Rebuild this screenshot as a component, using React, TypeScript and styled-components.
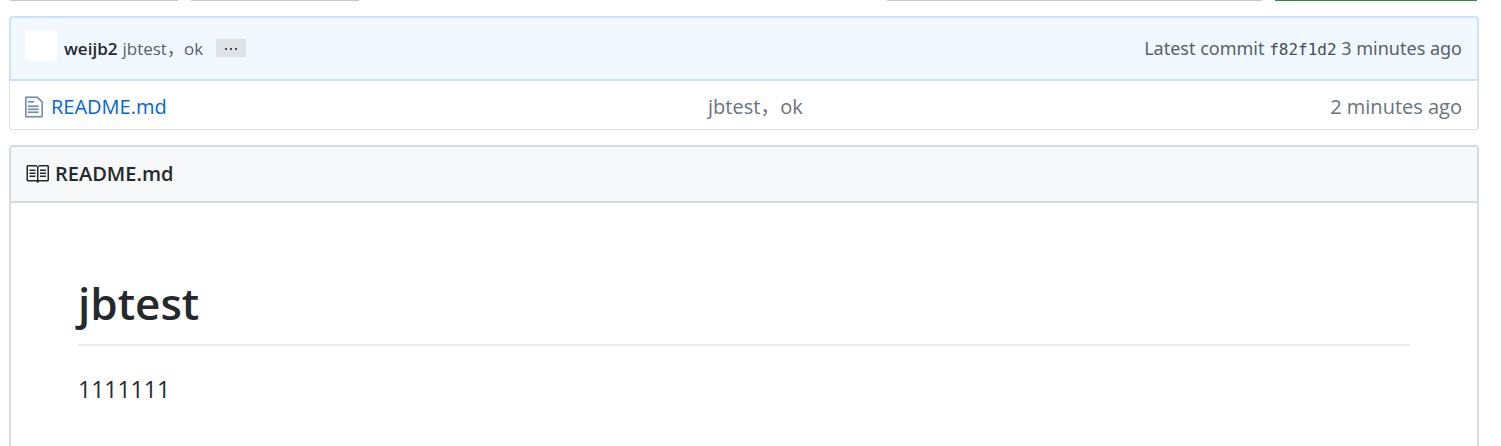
import React from 'react';
import styled, { createGlobalStyle } from 'styled-components';

const GlobalStyle = createGlobalStyle`
  *, *::before, *::after { box-sizing: border-box; }
  body {
    margin: 0;
    background: #fff;
    color: #24292e;
    font: 20px/30px "Open Sans", "Noto Sans CJK SC", sans-serif;
    overflow-x: hidden;
  }
`;

const Page = styled.main`
  padding: 0 22px 0 9px;
`;

const Toolbar = styled.div`
  display: flex;
  gap: 13px;
  height: 1px;
  padding: 0 2px 0 1px;
  margin-bottom: 15px;
`;

const ToolbarEdge = styled.span<{ $width: number; $color?: string; $push?: boolean }>`
  width: ${p => p.$width}px;
  margin-left: ${p => (p.$push ? 'auto' : '0')};
  background: ${p => p.$color ?? '#c3c6c9'};
`;

const CommitBar = styled.section`
  display: flex;
  align-items: center;
  justify-content: space-between;
  height: 65px;
  padding: 0 15px 0 14px;
  border: 2px solid #c8e1ff;
  border-radius: 4px 4px 0 0;
  background: #f1f8ff;
  color: #586069;
`;

const CommitInfo = styled.div`
  display: flex;
  align-items: center;
`;

const CommitMeta = styled.div`
  font-family: "Noto Sans", "Noto Sans CJK SC", sans-serif;
  font-size: 18px;
`;

const Avatar = styled.span`
  width: 32px;
  height: 30px;
  margin: 0 7px 5px 0;
  border-radius: 3px;
  background: #fff;
`;

const Author = styled.a`
  margin-right: 5px;
  color: #24292e;
  font-size: 17px;
  font-weight: 600;
  text-decoration: none;
`;

const CommitMessage = styled.a`
  color: #586069;
  font-size: 17px;
  text-decoration: none;
`;

const Expander = styled.button`
  display: flex;
  align-items: center;
  justify-content: center;
  gap: 3px;
  width: 30px;
  height: 18px;
  margin: 0 0 2px 13px;
  padding: 3px 0 0;
  border: 0;
  border-radius: 1px;
  background: #dfe2e5;
`;

const Dot = styled.span`
  width: 2px;
  height: 2px;
  background: #444d56;
`;

const Sha = styled.a`
  color: #444d56;
  font: 16px/30px "DejaVu Sans Mono", monospace;
  text-decoration: none;
`;

const Files = styled.table`
  width: 100%;
  border: 1px solid #dfe2e5;
  border-right-width: 2px;
  border-top: 0;
  border-radius: 0 0 4px 4px;
  border-collapse: separate;
  border-spacing: 0;
  table-layout: fixed;
  color: #6a737d;
`;

const Cell = styled.td<{ $width?: string; $end?: boolean }>`
  width: ${p => p.$width ?? 'auto'};
  height: 48px;
  padding: ${p => (p.$end ? '3px 15px 0 0' : '3px 0 0 15px')};
  text-align: ${p => (p.$end ? 'right' : 'left')};
`;

const FileName = styled.div`
  display: flex;
  align-items: center;
  gap: 8px;
`;

const FileLink = styled.a`
  color: #0366d6;
  text-decoration: none;
`;

const Readme = styled.section`
  margin-top: 15px;
  border: 2px solid #d8dbde;
  border-radius: 4px;
`;

const ReadmeHeader = styled.h2`
  display: flex;
  align-items: center;
  gap: 6px;
  height: 56px;
  margin: 0;
  padding: 0 14px;
  border-bottom: 2px solid #d8dbde;
  background: #f6f8fa;
  font-size: 20px;
  font-weight: 600;
`;

const Article = styled.article`
  padding: 70px 67px 40px;
`;

const Title = styled.h1`
  margin: 0 0 25px;
  padding-bottom: 11px;
  border-bottom: 2px solid #eaecef;
  font-size: 44px;
  font-weight: 600;
  line-height: 60px;
`;

const Paragraph = styled.p`
  margin: 0;
  font-size: 23px;
  line-height: 36px;
`;

const FileIcon = () => (
  <svg width="18" height="24" viewBox="0 0 12 16" fill="#7590b0" stroke="#7590b0" strokeWidth="0.15" aria-hidden="true">
    <path d="M6 5H2V4h4v1zM2 8h7V7H2v1zm0 2h7V9H2v1zm0 2h7v-1H2v1zm10-7.5V14c0 .55-.45 1-1 1H1c-.55 0-1-.45-1-1V2c0-.55.45-1 1-1h7.5L12 4.5zM11 5L8 2H1v12h10V5z" />
  </svg>
);

const BookIcon = () => (
  <svg width="24" height="24" viewBox="0 0 16 16" fill="#24292e" aria-hidden="true">
    <path d="M3 5h4v1H3V5zm0 3h4V7H3v1zm0 2h4V9H3v1zm11-5h-4v1h4V5zm0 2h-4v1h4V7zm0 2h-4v1h4V9zm2-6v9c0 .55-.45 1-1 1H9.5l-1 1-1-1H2c-.55 0-1-.45-1-1V3c0-.55.45-1 1-1h5.5l1 1 1-1H15c.55 0 1 .45 1 1zm-8 .5L7.5 3H2v9h6V3.5zm7-.5H9.5l-.5.5V12h6V3z" />
  </svg>
);

export default function App() {
  return (
    <>
      <GlobalStyle />
      <Page>
        <Toolbar aria-hidden="true">
          <ToolbarEdge $width={168} />
          <ToolbarEdge $width={168} />
          <ToolbarEdge $width={375} $push />
          <ToolbarEdge $width={202} $color="#28883f" />
        </Toolbar>

        <CommitBar>
          <CommitInfo>
            <Avatar />
            <Author href="#author">weijb2</Author>
            <CommitMessage href="#commit">jbtest，ok</CommitMessage>
            <Expander type="button" aria-label="Toggle commit message">
              <Dot />
              <Dot />
              <Dot />
            </Expander>
          </CommitInfo>
          <CommitMeta>
            Latest commit <Sha href="#commit">f82f1d2</Sha> 3 minutes ago
          </CommitMeta>
        </CommitBar>

        <Files>
          <tbody>
            <tr>
              <Cell $width="683px">
                <FileName>
                  <FileIcon />
                  <FileLink href="#readme">README.md</FileLink>
                </FileName>
              </Cell>
              <Cell>jbtest，ok</Cell>
              <Cell $end>2 minutes ago</Cell>
            </tr>
          </tbody>
        </Files>

        <Readme id="readme">
          <ReadmeHeader>
            <BookIcon />
            README.md
          </ReadmeHeader>
          <Article>
            <Title>jbtest</Title>
            <Paragraph>1111111</Paragraph>
          </Article>
        </Readme>
      </Page>
    </>
  );
}
